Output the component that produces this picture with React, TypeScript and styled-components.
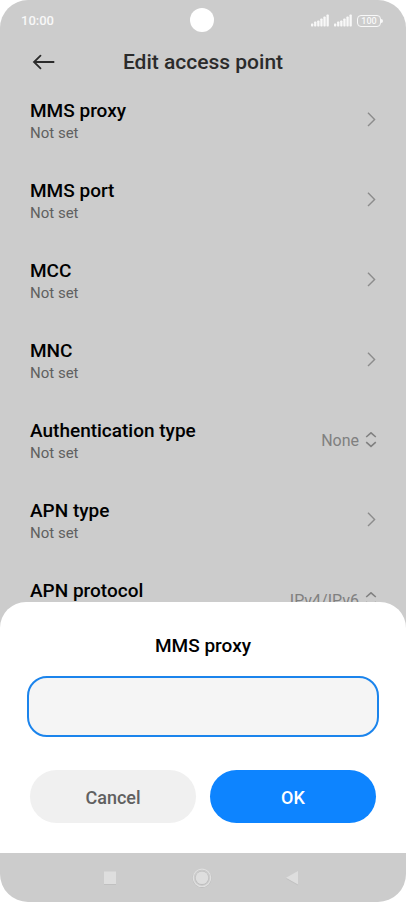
import React, { useState } from "react";
import styled, { createGlobalStyle } from "styled-components";

const GlobalStyle = createGlobalStyle`
  *, *::before, *::after { box-sizing: border-box; }
  body { margin: 0; background: #fff; font-family: Roboto, "Liberation Sans", sans-serif; }
  button, input { font: inherit; border: 0; }
`;

const Phone = styled.div`
  position: relative;
  display: flex;
  flex-direction: column;
  height: 100vh;
  overflow: hidden;
  border-radius: 28px;
  background: #ccc;
`;

const StatusBar = styled.div`
  display: grid;
  grid-template-columns: 1fr auto 1fr;
  align-items: center;
  height: 40px;
  padding: 0 23px 0 21px;
  color: #f8f8f8;
`;

const Clock = styled.time`
  font-size: 13px;
  line-height: 16px;
  font-weight: 500;
  padding-top: 2px;
`;

const Camera = styled.span`
  width: 24px;
  height: 24px;
  border-radius: 50%;
  background: #fff;
`;

const Indicators = styled.div`
  display: flex;
  justify-content: flex-end;
  align-items: center;
  gap: 5px;
  padding-top: 1px;

  svg { display: block; }
`;

const BatteryBox = styled.span`
  display: flex;
  align-items: center;
`;

const BatteryLevel = styled.span`
  width: 24px;
  height: 12px;
  border: 1px solid #f8f8f8;
  border-radius: 4px;
  font-size: 9px;
  line-height: 11px;
  font-weight: 500;
  text-align: center;
`;

const BatteryTip = styled.span`
  width: 2px;
  height: 4px;
  border-radius: 0 2px 2px 0;
  background: #f8f8f8;
`;

const Header = styled.header`
  display: grid;
  grid-template-columns: 28px 1fr 28px;
  align-items: center;
  height: 44px;
  padding: 0 30px;
`;

const BackButton = styled.button`
  display: flex;
  align-items: center;
  justify-content: center;
  height: 28px;
  padding: 0;
  background: none;
  color: #2b2b2b;
`;

const Title = styled.h1`
  margin: 0;
  font-size: 21px;
  line-height: 28px;
  font-weight: 500;
  text-align: center;
  color: #2b2b2b;
`;

const Content = styled.main`
  position: relative;
  flex: 1;
  min-height: 0;
  overflow: hidden;
`;

const List = styled.ul`
  margin: 0;
  padding: 0;
  list-style: none;
`;

const Row = styled.button`
  display: flex;
  align-items: flex-start;
  justify-content: space-between;
  width: 100%;
  height: 80px;
  padding: 14px 29px 0 30px;
  background: none;
  text-align: left;
`;

const RowText = styled.span`
  display: flex;
  flex-direction: column;
`;

const RowTitle = styled.span`
  font-size: 19px;
  line-height: 26px;
  font-weight: 500;
  color: #000;
`;

const RowNote = styled.span`
  font-size: 15px;
  line-height: 18px;
  color: #606060;
`;

const RowEnd = styled.span`
  display: flex;
  align-items: center;
  gap: 6px;
  height: 44px;
  font-size: 16px;
  line-height: 20px;
  color: #808080;
`;

const RowValue = styled.span`
  padding-top: 2px;
`;

const Sheet = styled.form`
  position: absolute;
  left: 0;
  right: 0;
  bottom: 0;
  padding: 32px 30px 30px;
  border-radius: 26px 26px 0 0;
  background: #fff;
`;

const FieldLabel = styled.label`
  display: block;
  font-size: 19px;
  line-height: 24px;
  font-weight: 500;
  text-align: center;
  color: #000;
`;

const Field = styled.input`
  display: block;
  width: calc(100% + 6px);
  height: 61px;
  margin: 18px -3px 33px;
  padding: 0 18px;
  border: 2px solid #1b84ec;
  border-radius: 20px;
  outline: none;
  background: #f5f5f5;
  font-size: 19px;
`;

const Actions = styled.div`
  display: grid;
  grid-template-columns: 1fr 1fr;
  gap: 14px;
`;

const ActionButton = styled.button<{ $primary?: boolean }>`
  height: 53px;
  padding: 2px 0 0;
  border-radius: 27px;
  font-size: 18px;
  line-height: 24px;
  font-weight: 500;
  background: ${(p) => (p.$primary ? "#0d84ff" : "#f0f0f0")};
  color: ${(p) => (p.$primary ? "#fff" : "#606060")};
`;

const NavBar = styled.nav`
  display: flex;
  align-items: center;
  justify-content: center;
  gap: 68px;
  height: 49px;
  padding-right: 2px;
`;

const NavButton = styled.button`
  display: flex;
  padding: 0;
  background: none;
`;

const Signal = () => (
  <svg width="18" height="13" viewBox="0 0 18 13" fill="#f8f8f8" aria-hidden="true">
    {[3, 5, 6, 8, 10, 12].map((h, i) => (
      <rect key={i} x={i * 3.1} y={12.5 - h} width="2.3" height={h} rx="0.7" />
    ))}
  </svg>
);

const Chevron = () => (
  <svg width="12" height="16" viewBox="0 0 12 16" fill="none" stroke="#8c8c8c" strokeWidth="1.4" aria-hidden="true">
    <path d="M3 0.8 L9.6 7.4 L3 14" />
  </svg>
);

const UpDown = () => (
  <svg width="12" height="16" viewBox="0 0 12 16" fill="none" stroke="#808080" strokeWidth="1.6" aria-hidden="true">
    <path d="M1.2 5 L6 0.8 L10.8 5 M1.2 10.2 L6 14.4 L10.8 10.2" />
  </svg>
);

const settings: { title: string; value?: string }[] = [
  { title: "MMS proxy" },
  { title: "MMS port" },
  { title: "MCC" },
  { title: "MNC" },
  { title: "Authentication type", value: "None" },
  { title: "APN type" },
  { title: "APN protocol", value: "IPv4/IPv6" },
];

export default function App() {
  const [proxy, setProxy] = useState("");

  return (
    <>
      <GlobalStyle />
      <Phone>
        <StatusBar>
          <Clock>10:00</Clock>
          <Camera />
          <Indicators>
            <Signal />
            <Signal />
            <BatteryBox>
              <BatteryLevel>100</BatteryLevel>
              <BatteryTip />
            </BatteryBox>
          </Indicators>
        </StatusBar>
        <Header>
          <BackButton type="button" aria-label="Back">
            <svg width="24" height="16" viewBox="0 0 24 16" fill="none" stroke="currentColor" strokeWidth="1.8" strokeLinecap="round">
              <path d="M2 8 H21.6 M8.5 1.6 L2 8 L8.5 14.4" />
            </svg>
          </BackButton>
          <Title>Edit access point</Title>
        </Header>
        <Content>
          <List>
            {settings.map(({ title, value }) => (
              <li key={title}>
                <Row type="button">
                  <RowText>
                    <RowTitle>{title}</RowTitle>
                    <RowNote>Not set</RowNote>
                  </RowText>
                  <RowEnd>
                    {value && <RowValue>{value}</RowValue>}
                    {value ? <UpDown /> : <Chevron />}
                  </RowEnd>
                </Row>
              </li>
            ))}
          </List>
          <Sheet role="dialog" aria-label="MMS proxy" onSubmit={(e) => e.preventDefault()}>
            <FieldLabel htmlFor="mms-proxy">MMS proxy</FieldLabel>
            <Field id="mms-proxy" type="text" value={proxy} onChange={(e) => setProxy(e.target.value)} />
            <Actions>
              <ActionButton type="button">Cancel</ActionButton>
              <ActionButton type="submit" $primary>OK</ActionButton>
            </Actions>
          </Sheet>
        </Content>
        <NavBar>
          <NavButton type="button" aria-label="Recent apps">
            <svg width="24" height="24" viewBox="0 0 24 24">
              <rect x="6" y="6.5" width="12" height="12.5" fill="#c0c0c0" />
              <rect x="6" y="5.5" width="12" height="12.5" fill="#dedede" />
            </svg>
          </NavButton>
          <NavButton type="button" aria-label="Home">
            <svg width="24" height="24" viewBox="0 0 24 24">
              <circle cx="12" cy="12.3" r="9" fill="none" stroke="#bebebe" strokeWidth="1.2" />
              <circle cx="12" cy="11.8" r="8.7" fill="none" stroke="#e0e0e0" strokeWidth="1.2" />
              <circle cx="12" cy="12" r="6.9" fill="#bebebe" />
              <circle cx="12" cy="11.8" r="6.3" fill="#dedede" />
            </svg>
          </NavButton>
          <NavButton type="button" aria-label="Back to previous">
            <svg width="24" height="24" viewBox="0 0 24 24">
              <path d="M4 12.7 L16 6 V19.4 Z" fill="#c0c0c0" />
              <path d="M4 11.8 L16 5 V18.6 Z" fill="#dedede" />
            </svg>
          </NavButton>
        </NavBar>
      </Phone>
    </>
  );
}
